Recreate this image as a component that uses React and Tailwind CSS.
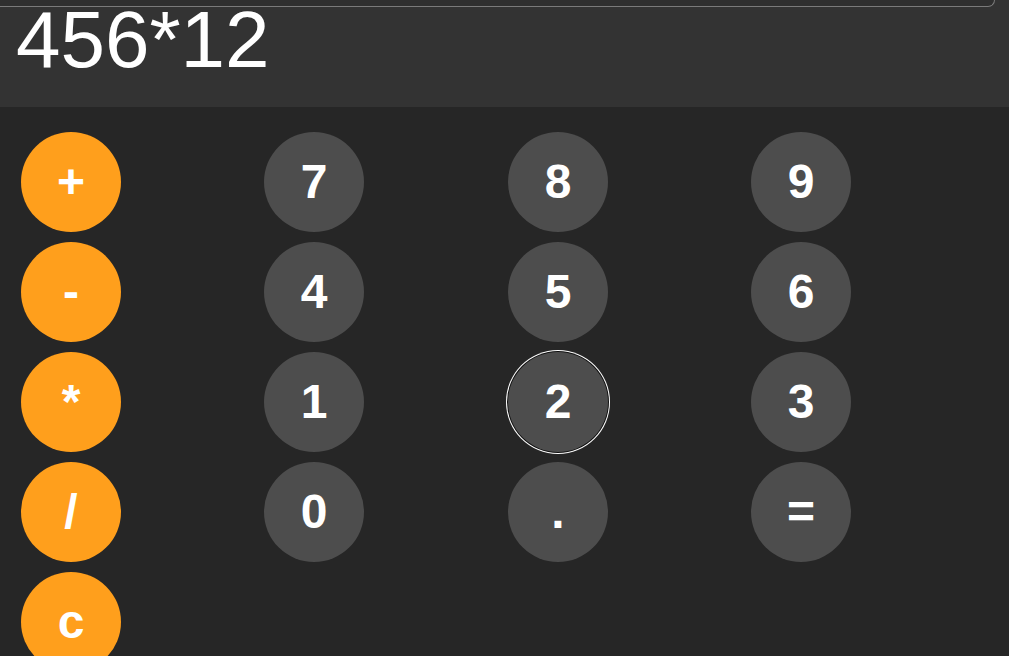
import React from "react";

const ops = ["+", "-", "*", "/", "c"];
const nums = ["7", "8", "9", "4", "5", "6", "1", "2", "3", "0", ".", "="];

function Btn({ label, orange, focused }) {
  return (
    <button
      className={
        "w-[100px] h-[100px] rounded-full flex items-center justify-center text-white font-bold text-[48px] shrink-0 " +
        (orange ? "bg-[#ff9f1c] " : "bg-[#4d4d4d] ") +
        (focused ? "shadow-[0_0_0_1px_#101010,0_0_0_2px_#ffffff]" : "")
      }
      style={{ fontFamily: '"Liberation Sans", Arial, sans-serif' }}
    >
      {label}
    </button>
  );
}

export default function App() {
  return (
    <div
      className="w-[1009px] h-[656px] overflow-hidden bg-[#262626] flex flex-col"
      style={{ fontFamily: '"Liberation Sans", Arial, sans-serif' }}
    >
      <div className="relative h-[107px] shrink-0 bg-[#333333] px-4">
        <div className="absolute left-0 top-0 w-[995px] h-[7px] border-b border-r border-[#7a7a7a] rounded-br-[10px] bg-[#2f2f2f]" />
        <div className="text-white text-[80px] leading-[80px]">456*12</div>
      </div>
      <div className="flex pt-[25px] pl-[21px]">
        <div className="flex flex-col gap-[10px] w-[100px]">
          {ops.map((o) => (
            <Btn key={o} label={o} orange />
          ))}
        </div>
        <div className="ml-[143px] grid grid-cols-[244px_243px_100px] gap-y-[10px] content-start">
          {nums.map((n) => (
            <Btn key={n} label={n} focused={n === "2"} />
          ))}
        </div>
      </div>
    </div>
  );
}
